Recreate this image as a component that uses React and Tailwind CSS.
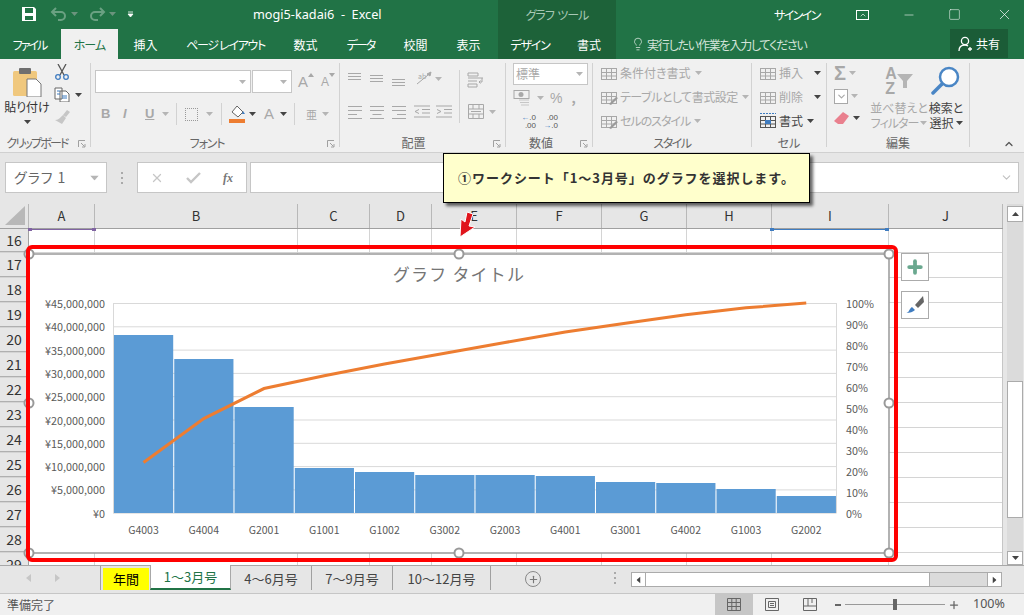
import React from 'react';
import { Minus, Square, X, ChevronUp, ChevronDown, Lightbulb, Plus } from 'lucide-react';

const GREY = '#a8a8a8';

// --- tiny ribbon helpers ---
const Caret = ({ dark, className = '' }) => (
  <svg width="7" height="4" viewBox="0 0 7 4" className={`shrink-0 ${className}`}>
    <path d="M0 0h7L3.5 4z" fill={dark ? '#444' : '#b5b5b5'} />
  </svg>
);

const Lines = ({ widths, offset = 0, step = 4.5, align = 'left' }) => (
  <svg width="16" height="16" viewBox="0 0 16 16" className="shrink-0">
    {widths.map((w, i) => {
      const x = align === 'right' ? 15 - w : align === 'center' ? 8 - w / 2 : 1;
      return <rect key={i} x={x} y={Math.round(offset + i * step)} width={w} height="1" fill={GREY} />;
    })}
  </svg>
);

const Dots = ({ className = '' }) => (
  <div className={`flex flex-col gap-[3px] shrink-0 ${className}`}>
    <div className="w-[2px] h-[2px] bg-[#aaa]" />
    <div className="w-[2px] h-[2px] bg-[#aaa]" />
    <div className="w-[2px] h-[2px] bg-[#aaa]" />
  </div>
);

const Launcher = () => (
  <svg width="8" height="8" viewBox="0 0 8 8" className="absolute right-[4px] -bottom-[1px]">
    <path d="M0.5 7V.5H7M3 3l3.500 3.500M4 7h3V4" fill="none" stroke="#a0a0a0" strokeWidth="1" />
  </svg>
);

const Group = ({ w, label, labelClass = '', launcher, children, className = '' }) => (
  <div className={`relative flex flex-col shrink-0 border-r border-[#d2d2d2] ${w}`}>
    <div className={`h-[70px] ${className}`}>{children}</div>
    <div className={`absolute -bottom-[4px] inset-x-0 h-[16px] leading-[16px] text-center text-[12px] text-[#666] ${labelClass}`}>{label}</div>
    {launcher && <Launcher />}
  </div>
);

const CellIcon = ({ mark, blue }) => (
  <svg width="18" height="16" viewBox="0 0 18 16" className="shrink-0">
    <g fill="none" stroke={blue ? '#555' : GREY}>
      <rect x="1.5" y="3.5" width="15" height="11" />
      <path d="M1.5 7.500h15M1.500 11h15M6.500 3.500v11M11.500 3.500v11" />
    </g>
    {mark === 'brush' && <path d="M9 15l7-7 2 1-7 7z" fill="#9a9a9a" />}
    {blue && <rect x="6" y="7" width="6" height="4" fill="#3f7cc0" />}
    {blue && <path d="M1 .5h16" stroke="#3f7cc0" strokeDasharray="2 1" />}
  </svg>
);

const Col = ({ w, children }) => (
  <div className={`${w} h-full shrink-0 flex items-center justify-center border-r border-[#b8b8b8] text-[13px] text-[#333]`}>{children}</div>
);

// selection tick under a column header
const ColMark = ({ className }) => (
  <div className={`absolute top-[25px] h-[1px] ${className}`}>
    <div className="absolute -left-[1px] -top-[1px] w-[4px] h-[3px] bg-inherit" />
    <div className="absolute -right-[1px] -top-[1px] w-[4px] h-[3px] bg-inherit" />
  </div>
);

const columns = [
  ['A', 'w-[66px]'], ['B', 'w-[203px]'], ['C', 'w-[72px]'], ['D', 'w-[62px]'], ['E', 'w-[85px]'],
  ['F', 'w-[85px]'], ['G', 'w-[85px]'], ['H', 'w-[85px]'], ['I', 'w-[117px]'], ['J', 'w-[114px]'],
];
const rows = [16, 17, 18, 19, 20, 21, 22, 23, 24, 25, 26, 27, 28, 29];

// --- chart data ---
const bars = [
  ['G4003', 335], ['G4004', 359], ['G2001', 407], ['G1001', 468], ['G1002', 472], ['G3002', 475],
  ['G2003', 475], ['G4001', 476], ['G3001', 482], ['G4002', 483], ['G1003', 489], ['G2002', 496],
];
const total = bars.reduce((s, b) => s + (513 - b[1]), 0);
let running = 0;
const linePoints = bars.map((b, i) => {
  running += 513 - b[1];
  return `${143.5 + i * 60.25},${513 - (running / total) * 210}`;
}).join(' ');
const yen = ['¥45,000,000', '¥40,000,000', '¥35,000,000', '¥30,000,000', '¥25,000,000', '¥20,000,000', '¥15,000,000', '¥10,000,000', '¥5,000,000', '¥0'];
const handles = [[29, 254], [459, 254], [889, 254], [29, 403], [889, 403], [29, 553], [459, 553], [889, 553]];

function Chart() {
  return (
    <svg viewBox="29 254 860 300" className="absolute left-[29px] top-[50px] w-[860px] h-[300px] overflow-visible">
      <rect x="29" y="254" width="860" height="299" fill="#fff" stroke="#999" strokeWidth="1.5" />
      <text x="459" y="281" textAnchor="middle" fontSize="17" fill="#757575" letterSpacing="1.2" className="[font-feature-settings:normal]">グラフ タイトル</text>
      {yen.map((_, i) => (
        <line key={i} x1="113" x2="836.5" y1={303.5 + i * 23.3} y2={303.5 + i * 23.3} stroke="#d9d9d9" />
      ))}
      <line x1="113.5" x2="113.5" y1="303" y2="513" stroke="#d9d9d9" />
      <line x1="836.5" x2="836.5" y1="303" y2="513" stroke="#d9d9d9" />
      {bars.map(([name, top], i) => (
        <g key={name}>
          <rect x={114 + i * 60.25} y={top} width="59.2" height={513 - top} fill="#5b9bd5" />
          <text x={143.5 + i * 60.25} y="534" textAnchor="middle" fontSize="10.500" fill="#595959">{name}</text>
        </g>
      ))}
      <polyline points={linePoints} fill="none" stroke="#ed7d31" strokeWidth="3" />
      {yen.map((t, i) => (
        <text key={t} x="105" y={308 + i * 23.3} textAnchor="end" fontSize="10.800" fill="#595959">{t}</text>
      ))}
      {[100, 90, 80, 70, 60, 50, 40, 30, 20, 10, 0].map((p, i) => (
        <text key={p} x="846" y={308 + i * 21} fontSize="10.800" fill="#595959">{p}%</text>
      ))}
      {handles.map(([x, y]) => (
        <circle key={`${x}-${y}`} cx={x} cy={y} r="4.500" fill="#fff" stroke="#999" strokeWidth="2" />
      ))}
    </svg>
  );
}

export default function App() {
  return (
    <div className="w-[1024px] h-[615px] overflow-hidden flex flex-col bg-[#e6e6e6] relative [font-family:'Noto_Sans_CJK_JP','Noto_Sans',sans-serif] [font-feature-settings:'palt']">
      {/* Title bar */}
      <div className="h-[29px] shrink-0 bg-[#217346] flex items-center text-white text-[12.5px]">
        <div className="w-[498px] flex items-center shrink-0">
          <svg width="16" height="16" viewBox="0 0 16 16" className="ml-[21px]">
            <path d="M1 1h12l2 2v12H1z" fill="#fff" />
            <rect x="4" y="2" width="8" height="5" fill="#217346" />
            <rect x="4" y="10" width="8" height="4" fill="#217346" />
          </svg>
          <svg width="18" height="14" viewBox="0 0 18 14" className="ml-[13px] opacity-40">
            <path d="M6 1L2 5l4 4M2 5h9a4 4 0 0 1 0 8H8" fill="none" stroke="#d8e6dd" strokeWidth="2" />
          </svg>
          <Caret className="ml-[3px] opacity-50" />
          <svg width="18" height="14" viewBox="0 0 18 14" className="ml-[10px] opacity-40">
            <path d="M12 1l4 4-4 4M16 5H7a4 4 0 0 0 0 8h3" fill="none" stroke="#d8e6dd" strokeWidth="2" />
          </svg>
          <Caret className="ml-[3px] opacity-50" />
          <svg width="7" height="7" viewBox="0 0 7 7" className="ml-[11px]">
            <path d="M1 1h5M1 3h5l-2.500 3z" fill="#fff" stroke="#fff" strokeWidth=".8" />
          </svg>
          <span className="ml-[119px] whitespace-pre [font-family:'Noto_Sans',sans-serif] text-[12.7px]">mogi5-kadai6  -  Excel</span>
        </div>
        <div className="w-[118px] shrink-0 h-full bg-[#1d6239] flex items-center justify-center text-[12px] tracking-[-1px] text-[#a8c8b5] whitespace-pre">グラフ  ツール</div>
        <span className="ml-[158px] w-[46px] text-[12px] tracking-[-1.6px] whitespace-nowrap">サインイン</span>
        <div className="ml-[36px] w-[13px] h-[10px] border border-white flex items-center justify-center">
          <ChevronUp size={8} strokeWidth={2} />
        </div>
        <Minus size={14} strokeWidth={1} className="ml-[33px]" />
        <Square size={13} strokeWidth={1} className="ml-[32px]" />
        <X size={17} strokeWidth={1} className="ml-[35px]" />
      </div>

      {/* Tab row */}
      <div className="h-[30px] shrink-0 bg-[#217346] flex items-stretch text-white text-[12px]">
        <div className="w-[61px] pr-[2px] flex items-center justify-center pt-[2px] tracking-[-2px]">ファイル</div>
        <div className="w-[57px] flex items-center justify-center bg-[#f0f0f0] text-[#217346] pt-[2px] tracking-[-1px]">ホーム</div>
        <div className="w-[55px] flex items-center justify-center pt-[2px]">挿入</div>
        <div className="w-[105px] flex items-center justify-center pt-[2px] whitespace-pre tracking-[-1.3px]">ページ レイアウト</div>
        <div className="w-[55px] flex items-center justify-center pt-[2px]">数式</div>
        <div className="w-[55px] flex items-center justify-center pt-[2px] tracking-[-2px]">データ</div>
        <div className="w-[55px] flex items-center justify-center pt-[2px]">校閲</div>
        <div className="w-[55px] pr-[4px] flex items-center justify-center pt-[2px]">表示</div>
        <div className="w-[118px] bg-[#1d6239] flex items-center pt-[2px]">
          <span className="w-[64px] text-center tracking-[-1.2px]">デザイン</span>
          <span className="w-[54px] text-center">書式</span>
        </div>
        <Lightbulb size={14} strokeWidth={1.3} className="ml-[15px] self-center text-[#dfeae3]" />
        <span className="ml-[2px] self-center text-[#d5e4da] pt-[2px] tracking-[-1.2px]">実行したい作業を入力してください</span>
        <div className="ml-auto mr-[16px] w-[58px] mb-[1px] bg-[#1b5c37] flex items-center justify-center gap-[3px]">
          <svg width="15" height="16" viewBox="0 0 15 16">
            <circle cx="7" cy="5" r="3.600" fill="none" stroke="#fff" strokeWidth="1.3" />
            <path d="M1 15c0-4 2-6 6-6 1 0 2 .2 3 1M10 13h4M12 11v4" fill="none" stroke="#fff" strokeWidth="1.3" />
          </svg>
          <span>共有</span>
        </div>
      </div>

      {/* Ribbon */}
      <div className="h-[94px] shrink-0 bg-[#f0f0f0] border-b border-[#d0d0d0] pt-[4px] pb-[5px] flex text-[12px] relative">
        <Group w="w-[91px]" label="クリップボード" labelClass="pr-[16px] tracking-[-1.8px]" launcher className="flex">
          <div className="w-[54px] flex flex-col items-center pt-[3px]">
            <svg width="30" height="31" viewBox="0 0 30 31">
              <rect x="1" y="5" width="24" height="25" rx="1.500" fill="#f0c87e" />
              <rect x="7" y="2" width="12" height="6" rx="1" fill="#6f6f6f" />
              <path d="M15 13h9l5 5v13H15z" fill="#fff" stroke="#777" />
            </svg>
            <span className="text-[#333] mt-[2px] leading-[16px] whitespace-nowrap">貼り付け</span>
            <Caret dark className="mt-[5px]" />
          </div>
          <div className="flex flex-col pt-[1px] gap-[7px]">
            <svg width="16" height="16" viewBox="0 0 16 16">
              <path d="M4 0l6 11M12 0L6 11" stroke="#555" strokeWidth="1.3" />
              <circle cx="4" cy="13" r="2.300" fill="none" stroke="#3f7cc0" strokeWidth="1.3" />
              <circle cx="12" cy="13" r="2.300" fill="none" stroke="#3f7cc0" strokeWidth="1.3" />
            </svg>
            <div className="flex items-center gap-[5px]">
              <svg width="16" height="15" viewBox="0 0 16 15">
                <path d="M1 1h7v11H1zM6 4h6l3 3v8H6z" fill="#fff" stroke="#666" />
                <path d="M3 4h3M3 7h3M8 9h5M8 11h5" stroke="#3f7cc0" />
              </svg>
              <Caret dark />
            </div>
            <svg width="17" height="16" viewBox="0 0 17 16">
              <path d="M9 6l4-5 3 2-4 5zM9 6l3 3-4 6-7-4c3 0 5-2 8-5z" fill="#c6c6c6" />
            </svg>
          </div>
        </Group>

        <Group w="w-[249px]" label="フォント" labelClass="pr-[16px] tracking-[-1.2px]" launcher className="pl-[4px] pt-[7px]">
          <div className="flex">
            <div className="w-[156px] h-[23px] shrink-0 bg-white border border-[#c6c6c6] flex items-center justify-end pr-[4px]"><Caret /></div>
            <div className="ml-[1px] w-[40px] h-[23px] shrink-0 bg-white border border-[#c6c6c6] flex items-center justify-end pr-[4px]"><Caret /></div>
            <span className="ml-[6px] text-[15px] leading-[23px] text-[#a8a8a8] [font-family:'Liberation_Sans',sans-serif]">A</span>
            <svg width="6" height="4" viewBox="0 0 6 4" className="mt-[3px]"><path d="M0 4h6L3 0z" fill="#a8a8a8" /></svg>
            <span className="ml-[7px] text-[12px] leading-[25px] text-[#a8a8a8] [font-family:'Liberation_Sans',sans-serif]">A</span>
            <svg width="6" height="4" viewBox="0 0 6 4" className="mt-[3px]"><path d="M0 0h6L3 4z" fill="#a8a8a8" /></svg>
          </div>
          <div className="flex items-center mt-[8px] h-[22px] text-[#a8a8a8] [font-family:'Liberation_Sans',sans-serif]">
            <span className="ml-[6px] w-[22px] font-bold text-[13px]">B</span>
            <span className="w-[22px] italic font-bold text-[13px]">I</span>
            <span className="w-[17px] underline font-bold text-[13px]">U</span>
            <Caret />
            <div className="ml-[7px] w-px h-[22px] bg-[#d2d2d2]" />
            <div className="ml-[8px] w-[13px] h-[13px] border border-dotted border-[#999]" />
            <Caret className="ml-[8px]" />
            <div className="ml-[8px] w-px h-[22px] bg-[#d2d2d2]" />
            <svg width="17" height="18" viewBox="0 0 17 18" className="ml-[7px]">
              <path d="M8 1l6 6-5 5-6-5z" fill="#fff" stroke="#666" />
              <path d="M14 6l2 3-3 0z" fill="#3f7cc0" />
              <rect x="0" y="14" width="16" height="4" fill="#ed7d31" />
            </svg>
            <Caret dark className="ml-[3px]" />
            <span className="ml-[8px] w-[14px] text-[15px]">A</span>
            <Caret dark className="ml-[2px]" />
            <div className="ml-[7px] w-px h-[22px] bg-[#d2d2d2]" />
            <span className="ml-[11px] text-[11px] [font-family:'Noto_Sans_CJK_JP',sans-serif]">亜</span>
            <Caret className="ml-[5px]" />
          </div>
        </Group>

        <Group w="w-[166px]" label="配置" labelClass="pr-[18px]" launcher className="pl-[7px] pt-[5px]">
          <div className="flex h-[22px]">
            <div className="flex gap-[6px] w-[66px] mt-[4px]">
              <Lines widths={[13, 13, 13]} offset={1} step={3} />
              <Lines widths={[13, 13, 13]} offset={3} step={3} />
              <Lines widths={[13, 13, 13]} offset={7} step={3} />
            </div>
            <svg width="18" height="16" viewBox="0 0 18 16" className="ml-[3px] mt-[3px]">
              <path d="M1 13L12 4M15 1l-1 4-3-2z" stroke={GREY} fill={GREY} />
              <text x="2" y="8" fontSize="7" fill={GREY}>ab</text>
            </svg>
            <Caret className="mt-[9px] ml-[1px]" />
            <div className="ml-[17px] mt-[2px] w-px h-[53px] bg-[#d2d2d2]" />
            <svg width="17" height="16" viewBox="0 0 17 16" className="ml-[7px] mt-[4px]">
              <path d="M1 1h10v3H1zM1 6h15M1 9h9M1 12h9v3H1zM15 6v4h-3M13.500 8.500L12 10l1.500 1.500" fill="none" stroke={GREY} />
            </svg>
          </div>
          <div className="flex items-center h-[22px] mt-[11px]">
            <div className="flex gap-[6px] w-[66px]">
              <Lines widths={[14, 14, 9, 14]} offset={2} step={4} />
              <Lines widths={[14, 14, 9, 14]} offset={2} step={4} align="center" />
              <Lines widths={[14, 14, 9, 14]} offset={2} step={4} align="right" />
            </div>
            <div className="flex gap-[6px] ml-[1px] w-[46px]">
              <svg width="16" height="14" viewBox="0 0 16 14">
                <path d="M0 1h16M8 4.500h8M8 8h8M0 12h16M5 4.500L1 6.500l4 2" fill="none" stroke={GREY} />
              </svg>
              <svg width="16" height="14" viewBox="0 0 16 14">
                <path d="M0 1h16M8 4.500h8M8 8h8M0 12h16M1 4.500l4 2-4 2" fill="none" stroke={GREY} />
              </svg>
            </div>
            <svg width="16" height="16" viewBox="0 0 16 16" className="ml-[8px]">
              <path d="M.5.5h15v14H.5zM.5 5h15M.5 10h15M5 .5V5M11 .5V5M5 10v4.500M11 10v4.500M3 7.500h10" fill="none" stroke={GREY} />
            </svg>
            <Caret className="ml-[5px]" />
          </div>
        </Group>

        <Group w="w-[87px]" label="数値" labelClass="pr-[16px]" launcher className="pl-[7px]">
          <div className="w-[75px] h-[22px] bg-white border border-[#c6c6c6] flex items-center justify-between pl-[2px] pr-[4px] text-[#a8a8a8]">
            <span>標準</span><Caret />
          </div>
          <div className="flex items-center h-[22px] mt-[2px] text-[#a8a8a8]">
            <svg width="18" height="16" viewBox="0 0 18 16">
              <rect x="1" y=".5" width="15" height="8" fill="none" stroke={GREY} />
              <circle cx="8" cy="4.500" r="2.500" fill={GREY} />
              <path d="M6 10h10M7 12.500h9M8 15h8" stroke="#c6c6c6" />
            </svg>
            <Caret className="ml-[6px]" />
            <span className="ml-[6px] text-[14px] [font-family:'Liberation_Sans',sans-serif]">%</span>
            <span className="ml-[9px] font-bold text-[13px] leading-[10px]">,</span>
          </div>
          <div className="flex h-[22px] text-[8px] leading-[8px] text-[#555] [font-family:'Liberation_Sans',sans-serif] pt-[5px]">
            <span className="w-[22px] ml-[1px] text-right"><span className="text-[#3f7cc0]">←</span>.0<br />.00</span>
            <span className="w-[22px] text-right">.00<br /><span className="text-[#3f7cc0]">→</span>.0</span>
          </div>
        </Group>

        <Group w="w-[159px]" label="スタイル" labelClass="tracking-[-1.5px]" className="pl-[7px] flex flex-col text-[#a8a8a8] pt-[2px] gap-[8px]">
          <div className="flex items-center gap-[2px] h-[16px]"><CellIcon />条件付き書式<Caret className="ml-[2px]" /></div>
          <div className="flex items-center gap-[2px] h-[16px] whitespace-nowrap tracking-[-0.5px]"><CellIcon mark="brush" />テーブルとして書式設定<Caret className="ml-[2px]" /></div>
          <div className="flex items-center gap-[2px] h-[16px] tracking-[-1px]"><CellIcon mark="brush" />セルのスタイル<Caret className="ml-[2px]" /></div>
        </Group>

        <Group w="w-[75px]" label="セル" className="pl-[7px] flex flex-col pt-[2px] gap-[8px]">
          <div className="flex items-center gap-[2px] h-[16px] text-[#a8a8a8]"><CellIcon />挿入<Caret dark className="ml-[9px]" /></div>
          <div className="flex items-center gap-[2px] h-[16px] text-[#a8a8a8]"><CellIcon />削除<Caret dark className="ml-[9px]" /></div>
          <div className="flex items-center gap-[2px] h-[16px] text-[#444]"><CellIcon blue />書式<Caret dark className="ml-[2px]" /></div>
        </Group>

        <Group w="w-[143px]" label="編集" className="pl-[7px] flex">
          <div className="w-[34px] flex flex-col pt-[1px] gap-[6px]">
            <div className="flex items-center gap-[3px] h-[18px]">
              <span className="text-[20px] leading-[18px] text-[#a8a8a8] [font-family:'Liberation_Sans',sans-serif] font-bold">Σ</span>
              <Caret />
            </div>
            <div className="flex items-center gap-[3px] h-[16px]">
              <div className="w-[14px] h-[15px] border border-[#a8a8a8] bg-white flex items-center justify-center">
                <ChevronDown size={11} strokeWidth={2.5} className="text-[#a8a8a8]" />
              </div>
              <Caret />
            </div>
            <div className="flex items-center gap-[4px] h-[16px]">
              <svg width="15" height="14" viewBox="0 0 15 14"><path d="M9 1l6 4-6 8H4L0 10z" fill="#e9808e" /></svg>
              <Caret dark />
            </div>
          </div>
          <div className="w-[56px] ml-[3px] flex flex-col items-center text-[#a8a8a8] leading-[15px] pt-[3px]">
            <div className="flex items-center h-[30px]">
              <span className="text-[16px] leading-[15px] font-bold [font-family:'Liberation_Sans',sans-serif]">A<br />Z</span>
              <svg width="16" height="14" viewBox="0 0 16 14"><path d="M0 0h16l-6 7v7H6V7z" fill="#b5b5b5" /></svg>
            </div>
            <span className="mt-[4px] whitespace-nowrap">並べ替えと</span>
            <span className="flex items-center gap-[2px] whitespace-nowrap tracking-[-1px]">フィルター<Caret /></span>
          </div>
          <div className="w-[38px] flex flex-col items-center text-[#444] leading-[15px] pt-[3px]">
            <svg width="30" height="30" viewBox="0 0 30 30">
              <circle cx="18" cy="11" r="9" fill="#fff" stroke="#4a86c5" strokeWidth="2.500" />
              <path d="M11 18L2 27" stroke="#4a86c5" strokeWidth="3.500" strokeLinecap="round" />
            </svg>
            <span className="mt-[4px] whitespace-nowrap">検索と</span>
            <span className="flex items-center gap-[2px] whitespace-nowrap">選択<Caret dark /></span>
          </div>
        </Group>

        <ChevronUp size={12} strokeWidth={2.5} className="absolute right-[9px] bottom-[2px] text-[#555]" />
      </div>

      {/* Formula bar */}
      <div className="h-[51px] shrink-0 flex items-center pb-[2px] pl-[5px] pr-[5px]">
        <div className="w-[102px] h-[31px] shrink-0 bg-white border border-[#c6c6c6] flex items-center justify-between px-[8px] text-[14px] text-[#666] whitespace-pre">
          <span className="tracking-[1px]">グラフ 1</span>
          <Caret className="scale-125" />
        </div>
        <div className="w-[30px] shrink-0 flex justify-center"><Dots /></div>
        <div className="w-[110px] h-[31px] shrink-0 bg-white border border-[#c6c6c6] flex items-center text-[#c6c6c6]">
          <X size={14} strokeWidth={2.2} className="ml-[12px]" />
          <svg width="15" height="12" viewBox="0 0 15 12" className="ml-[22px]">
            <path d="M1 6l4 4 9-9" fill="none" stroke="#c6c6c6" strokeWidth="2.400" />
          </svg>
          <span className="ml-[22px] text-[12px] italic font-bold text-[#777] [font-family:'Liberation_Serif',serif]">fx</span>
        </div>
        <div className="ml-[3px] flex-1 h-[31px] bg-white border border-[#c6c6c6] flex items-center justify-end pr-[5px]">
          <ChevronDown size={13} className="text-[#c0c0c0]" />
        </div>
      </div>

      {/* Sheet */}
      <div className="flex-1 min-h-0 flex relative">
        <div className="w-[1003px] shrink-0 flex flex-col overflow-hidden">
          <div className="h-[25px] shrink-0 flex border-b border-[#a0a0a0]">
            <div className="w-[29px] shrink-0 border-r border-[#b8b8b8] relative">
              <svg width="20" height="19" viewBox="0 0 20 19" className="absolute right-[3px] bottom-[3px]"><path d="M20 0v19H0z" fill="#b8b8b8" /></svg>
            </div>
            {columns.map(([name, w]) => <Col key={name} w={w}>{name}</Col>)}
          </div>
          <div className="flex-1 min-h-0 overflow-hidden bg-white border-r border-[#c6c6c6]">
            {rows.map((r, i) => (
              <div key={r} className={`${i === 0 ? 'h-[24px]' : 'h-[25px]'} flex border-b border-[#d4d4d4]`}>
                <div className="w-[29px] shrink-0 bg-[#e6e6e6] border-r border-[#a0a0a0] border-b border-b-[#b0b0b0] flex items-center justify-center text-[14px] text-[#333]">{r}</div>
                {columns.map(([name, w]) => <div key={name} className={`${w} shrink-0 border-r border-[#d4d4d4]`} />)}
              </div>
            ))}
          </div>
        </div>
        {/* Vertical scrollbar */}
        <div className="w-[21px] shrink-0 flex flex-col items-center relative pl-[3px]">
          <div className="w-[16px] h-full flex flex-col bg-[#dbdbdb]">
            <div className="h-[16px] mt-[2px] bg-white border border-[#ababab] flex items-center justify-center"><Caret dark className="rotate-180" /></div>
            <div className="h-[137px] mt-[159px] bg-white border border-[#ababab]" />
            <div className="h-[14px] mt-auto bg-white border border-[#ababab] flex items-center justify-center"><Caret dark /></div>
          </div>
        </div>

        {/* Chart selection, overlays */}
        <ColMark className="left-[29px] w-[66px] bg-[#8064a2]" />
        <ColMark className="left-[771px] w-[117px] bg-[#3f7cc0]" />
        <Chart />
        <div className="absolute left-[26px] top-[41px] w-[872px] h-[317px] border-4 border-[#ff0000] rounded-[6px]" />
        <div className="absolute left-[901px] top-[49px] w-[28px] h-[28px] bg-white border border-[#ababab] flex items-center justify-center">
          <Plus size={20} strokeWidth={4.5} className="text-[#6aa88f]" />
        </div>
        <div className="absolute left-[901px] top-[87px] w-[28px] h-[28px] bg-white border border-[#ababab] flex items-center justify-center">
          <svg width="20" height="18" viewBox="0 0 20 18">
            <path d="M10 9l8-9 1 6-6 6z" fill="#666" />
            <path d="M1 17c3 0 3-4 6-6l3 3c-2 2-5 3-9 3z" fill="#3f7cc0" />
          </svg>
        </div>
      </div>

      {/* Sheet tabs */}
      <div className="h-[28px] shrink-0 border-t border-[#a8a8a8] flex items-start text-[13px] text-[#444]">
        <div className="w-[101px] h-[24px] shrink-0 flex items-center border-r border-[#a0a0a0]">
          <svg width="5" height="8" viewBox="0 0 5 8" className="ml-[26px]"><path d="M5 0v8L0 4z" fill="#c6c6c6" /></svg>
          <svg width="5" height="8" viewBox="0 0 5 8" className="ml-[24px]"><path d="M0 0v8l5-4z" fill="#c6c6c6" /></svg>
        </div>
        <div className="ml-[2px] w-[46px] h-[22px] shrink-0 mt-[2px] bg-[#ffff00] text-black flex items-center justify-center">年間</div>
        <div className="ml-[1px] w-[81px] h-[25px] shrink-0 pt-[1px] bg-white border-x border-[#a8a8a8] border-b-2 border-b-[#217346] -mt-px text-[#217346] flex items-center justify-center">1～3月号</div>
        <div className="w-[81px] h-[24px] shrink-0 pt-[1px] border-r border-[#a0a0a0] flex items-center justify-center">4～6月号</div>
        <div className="w-[81px] h-[24px] shrink-0 pt-[1px] border-r border-[#a0a0a0] flex items-center justify-center">7～9月号</div>
        <div className="w-[98px] h-[24px] shrink-0 pt-[1px] border-r border-[#a0a0a0] flex items-center justify-center">10～12月号</div>
        <div className="ml-[34px] mt-[5px] w-[16px] h-[16px] shrink-0 rounded-full border border-[#888] flex items-center justify-center">
          <Plus size={11} strokeWidth={2.5} className="text-[#777]" />
        </div>
        <Dots className="ml-[73px] mt-[6px]" />
        <div className="ml-[15px] mt-[6px] w-[371px] h-[15px] shrink-0 flex bg-[#dbdbdb] border border-[#ababab]">
          <div className="w-[14px] bg-white border-r border-[#ababab] flex items-center justify-center"><Caret dark className="rotate-90" /></div>
          <div className="w-[284px] bg-white border-r border-[#ababab]" />
          <div className="ml-auto w-[14px] bg-white border-l border-[#ababab] flex items-center justify-center"><Caret dark className="-rotate-90" /></div>
        </div>
      </div>

      {/* Status bar */}
      <div className="h-[22px] shrink-0 bg-[#f0f0f0] border-t border-[#c6c6c6] flex items-center text-[12px] text-[#555]">
        <span className="ml-[7px] w-[48px]">準備完了</span>
        <div className="ml-[660px] w-[38px] h-full bg-[#c6c6c6] flex items-center justify-center">
          <svg width="14" height="13" viewBox="0 0 14 13"><path d="M.5.5h13v12H.5zM.5 4.500h13M.5 8.500h13M4.800.5v12M9.200.5v12" fill="none" stroke="#666" /></svg>
        </div>
        <svg width="14" height="13" viewBox="0 0 14 13" className="ml-[12px]"><path d="M.5.5h13v12H.5zM3.500 3.500h7v6h-7zM5 5.500h4M5 7.500h4" fill="none" stroke="#666" /></svg>
        <svg width="14" height="13" viewBox="0 0 14 13" className="ml-[24px]"><path d="M.5 12.500V.5h13v12zM.5 8h13M5 .5V8M9 .5V5" fill="none" stroke="#666" /></svg>
        <div className="ml-[18px] w-[6px] h-[2px] bg-[#666]" />
        <div className="ml-[4px] w-[100px] h-px bg-[#999] relative">
          <div className="absolute left-[48px] -top-[5px] w-[4px] h-[11px] bg-[#666]" />
        </div>
        <Plus size={12} strokeWidth={2.5} className="ml-[3px] text-[#666]" />
        <span className="ml-[13px] text-[12.5px] [font-family:'Noto_Sans',sans-serif]">100%</span>
      </div>

      {/* Callout and arrow */}
      <div className="absolute left-[443px] top-[153px] w-[367px] h-[50px] bg-[#ffffcc] border border-black shadow-[3px_3px_3px_rgba(0,0,0,0.6)] flex items-center justify-center text-[13px] tracking-[0.95px] [font-feature-settings:normal] font-bold text-[#333] whitespace-nowrap">
        ①ワークシート「1～3月号」のグラフを選択します。
      </div>
      <svg width="20" height="30" viewBox="0 0 20 30" className="absolute left-[455px] top-[209px] overflow-visible">
        <path d="M12 3l6 2-4 12 6 1L5 28 6 10l4 3z" fill="#e0151c" stroke="#fff" strokeWidth="1" />
      </svg>
    </div>
  );
}
